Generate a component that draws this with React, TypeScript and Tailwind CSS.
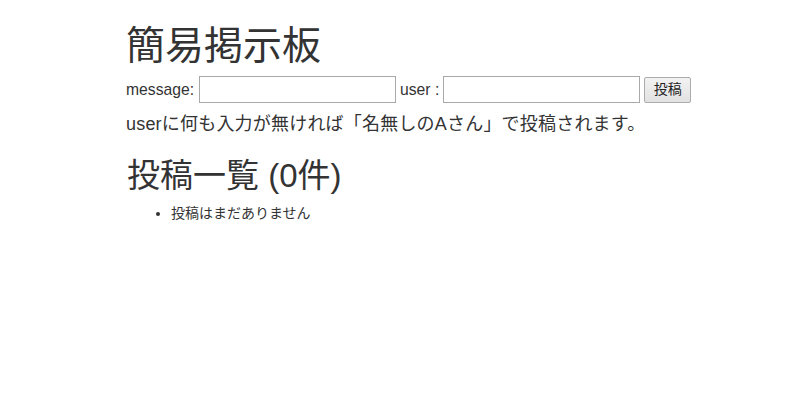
export default function App() {
  return (
    <div className="min-h-[407px] bg-white text-[#333] font-['Liberation_Sans','Noto_Sans_CJK_JP',sans-serif]">
      <div className="ml-[126px] pt-[21px]">
        {/* タイトル */}
        <h1 className="text-[39px] leading-[50px]">簡易掲示板</h1>

        {/* 投稿フォーム */}
        <form className="mt-[5px] flex items-center text-[15.7px]" onSubmit={(e) => e.preventDefault()}>
          <label className="mr-[5px]">message:</label>
          <input type="text" className="h-[27px] w-[197px] border border-[#a9a9a9] bg-white px-1 outline-none" />
          <label className="ml-[4px] mr-[4px]">user :</label>
          <input type="text" className="h-[27px] w-[197px] border border-[#a9a9a9] bg-white px-1 outline-none" />
          <button
            type="submit"
            className="ml-[4px] h-[26px] w-[47px] rounded-[2px] border border-[#acacac] bg-gradient-to-b from-[#f2f2f2] to-[#e2e2e2] text-[14px] text-[#222]"
          >
            投稿
          </button>
        </form>

        <p className="mt-[8px] text-[18px] leading-[26px] tracking-[0.2px]">userに何も入力が無ければ「名無しのAさん」で投稿されます。</p>

        {/* 投稿一覧 */}
        <h2 className="mt-[19px] ml-[1px] text-[33px] leading-[40px]">投稿一覧 (0件)</h2>
        <ul className="mt-[7px] list-disc pl-[45px] text-[14px] leading-[20px]">
          <li>投稿はまだありません</li>
        </ul>
      </div>
    </div>
  )
}
